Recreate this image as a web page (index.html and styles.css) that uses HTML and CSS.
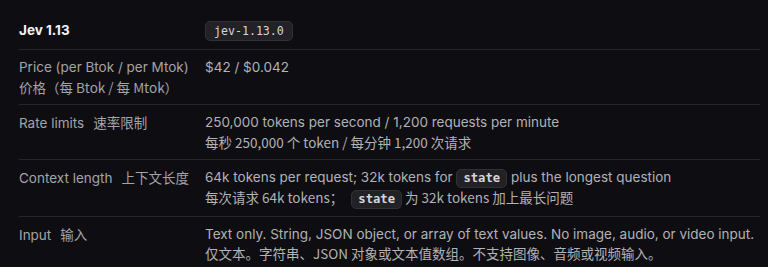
FILE: index.html
```html
<!DOCTYPE html>
<html lang="zh-CN">
<head>
    <meta charset="UTF-8">
    <title>Jev 1.13</title>
    <meta name="viewport" content="width=device-width, initial-scale=1.0">
    <link rel="stylesheet" href="styles.css">
</head>
<body>
    <div class="spec-table">
        <div class="spec-row head-row">
            <div class="spec-label model-name">Jev 1.13</div>
            <div class="spec-value"><code class="tag">jev-1.13.0</code></div>
        </div>
        <div class="spec-row">
            <div class="spec-label">
                <div>Price (per Btok / per Mtok)</div>
                <div class="zh">价格（每 Btok / 每 Mtok）</div>
            </div>
            <div class="spec-value">$42 / $0.042</div>
        </div>
        <div class="spec-row">
            <div class="spec-label">Rate limits<span class="zh gap">速率限制</span></div>
            <div class="spec-value">
                <div>250,000 tokens per second / 1,200 requests per minute</div>
                <div class="zh">每秒 250,000 个 token / 每分钟 1,200 次请求</div>
            </div>
        </div>
        <div class="spec-row">
            <div class="spec-label">Context length<span class="zh gap">上下文长度</span></div>
            <div class="spec-value">
                <div>64k tokens per request; 32k tokens for <code class="tag tag-bold">state</code> plus the longest question</div>
                <div class="zh">每次请求 64k tokens； <code class="tag tag-bold tag-after-punct">state</code> 为 32k tokens 加上最长问题</div>
            </div>
        </div>
        <div class="spec-row last-row">
            <div class="spec-label">Input<span class="zh gap">输入</span></div>
            <div class="spec-value">
                <div class="nowrap">Text only. String, JSON object, or array of text values. No image, audio, or video input.</div>
                <div class="zh">仅文本。字符串、JSON 对象或文本值数组。不支持图像、音频或视频输入。</div>
            </div>
        </div>
    </div>
</body>
</html>
```

FILE: styles.css
```css
html, body {
    margin: 0;
    padding: 0;
    background: #0e0d11;
    font-family: Inter, "Noto Sans CJK SC", sans-serif;
}
body {
    padding: 12px 8px 0 19px;
}
.spec-table {
    font-size: 13.5px;
    color: #b2b2b7;
}
.spec-row {
    display: grid;
    grid-template-columns: 186px 1fr;
    padding: 8px 0 7px 0;
    line-height: 19.5px;
    border-bottom: 1px solid #27262b;
}
.head-row {
    padding: 8px 0;
    line-height: 20px;
}
.last-row {
    border-bottom: none;
}
.spec-label {
    color: #a4a4a9;
}
.model-name {
    color: #f4f4f5;
    font-weight: 700;
}
.zh {
    font-family: "Noto Sans CJK SC", Inter, sans-serif;
}
.gap {
    margin-left: 9px;
}
.nowrap {
    white-space: nowrap;
}
.tag {
    display: inline-block;
    font-family: "DejaVu Sans Mono", monospace;
    font-size: 11.6px;
    line-height: 18px;
    color: #d6d6da;
    background: #222126;
    border: 1px solid #303035;
    border-radius: 5px;
    padding: 0 8px;
    vertical-align: middle;
}
.tag-bold {
    font-size: 12.2px;
    font-weight: 700;
    padding: 0 6px;
    line-height: 17px;
}
.tag-after-punct {
    margin-left: 5px;
}
```
